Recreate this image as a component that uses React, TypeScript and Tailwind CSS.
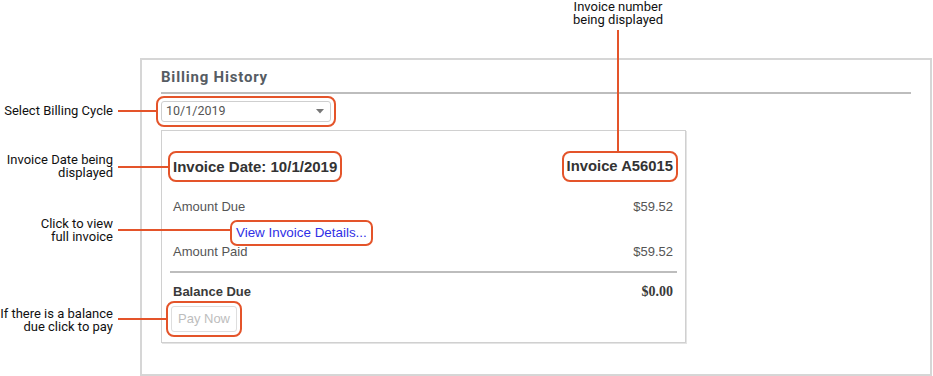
const orange = 'bg-[#e4542a]';

function Callout({ top, lines }: { top: string; lines: string[] }) {
    return (
        <div className={`absolute right-[820px] ${top} text-right text-[13px] leading-[13px] text-[#111]`}>
            {lines.map((l) => (
                <div key={l}>{l}</div>
            ))}
        </div>
    );
}

function Annotations() {
    return (
        <>
            <Callout top="top-[104px]" lines={['Select Billing Cycle']} />
            <Callout top="top-[153px]" lines={['Invoice Date being', 'displayed']} />
            <Callout top="top-[217px]" lines={['Click to view', 'full invoice']} />
            <Callout top="top-[307px]" lines={['If there is a balance', 'due click to pay']} />
            <div className="absolute left-[548px] top-0 w-[140px] text-center text-[13px] leading-[13px] text-[#111]">
                <div>Invoice number</div>
                <div>being displayed</div>
            </div>

            <div className={`absolute left-[118px] top-[110px] w-[38px] h-[2px] ${orange}`} />
            <div className={`absolute left-[118px] top-[166px] w-[50px] h-[2px] ${orange}`} />
            <div className={`absolute left-[118px] top-[229px] w-[112px] h-[2px] ${orange}`} />
            <div className={`absolute left-[118px] top-[318px] w-[48px] h-[2px] ${orange}`} />
            <div className={`absolute left-[617px] top-[30px] w-[2px] h-[121px] ${orange}`} />
        </>
    );
}

const ring = 'outline-2 outline-[#e4542a] rounded-[3px]';

export default function App() {
    return (
        <div className="relative w-[933px] h-[376px] bg-white overflow-hidden font-['Roboto',sans-serif]">
            <div className="ml-[140px] mt-[58px] w-[792px] h-[318px] border-2 border-[#d6d6d6] px-[19px] pt-[8px]">
                <div className="text-[15px] leading-[18px] font-bold tracking-[0.8px] text-[#565c63]">Billing History</div>
                <div className="mt-[6px] h-[2px] bg-[#bdbdbd]" />

                <div className={`mt-[7px] w-[170px] h-[21px] border border-[#cfcfcf] flex items-center justify-between pl-[4px] pr-[6px] outline-offset-[3px] ${ring}`}>
                    <span className="text-[12.5px] text-[#555]">10/1/2019</span>
                    <svg width="8" height="5" viewBox="0 0 8 5">
                        <path d="M0 0h8L4 4.5z" fill="#777" />
                    </svg>
                </div>

                <div className="mt-[8px] w-[525px] h-[213px] border border-[#d0d0d0] shadow-[1px_1px_0_#e4e4e4] pl-[11px] pr-[12px] pt-[25px] font-['Liberation_Sans',sans-serif]">
                    <div className="flex justify-between items-start">
                        <span className={`py-[2px] text-[15px] leading-[17px] font-bold text-[#333] outline-offset-[3px] ${ring}`}>
                            Invoice Date: 10/1/2019
                        </span>
                        <span className={`py-[2px] text-[14.8px] leading-[17px] font-bold text-[#333] outline-offset-[3px] ${ring}`}>
                            Invoice A56015
                        </span>
                    </div>

                    <div className="mt-[22px] flex justify-between text-[13px] leading-[16px] text-[#555]">
                        <span>Amount Due</span>
                        <span>$59.52</span>
                    </div>
                    <div className="mt-[5px] h-[18px]">
                        <span className={`ml-[61px] inline-block px-[2px] py-[1px] text-[13.4px] leading-[16px] text-[#2f2fe6] outline-offset-[2px] ${ring}`}>
                            View Invoice Details...
                        </span>
                    </div>
                    <div className="mt-[6px] flex justify-between text-[13px] leading-[16px] text-[#555]">
                        <span>Amount Paid</span>
                        <span>$59.52</span>
                    </div>

                    <div className="mt-[11px] -ml-[3px] -mr-[4px] h-[2px] bg-[#bdbdbd]" />

                    <div className="mt-[11px] flex justify-between text-[13px] leading-[16px] font-bold text-[#3a3a3a]">
                        <span>Balance Due</span>
                        <span className="font-['Liberation_Serif',serif] text-[14px]">$0.00</span>
                    </div>

                    <button className={`mt-[6px] -ml-[2px] w-[66px] h-[26px] border border-[#dedede] bg-white text-[13px] text-[#bdbdbd] outline-offset-[3px] ${ring}`}>
                        Pay Now
                    </button>
                </div>
            </div>

            <Annotations />
        </div>
    );
}
